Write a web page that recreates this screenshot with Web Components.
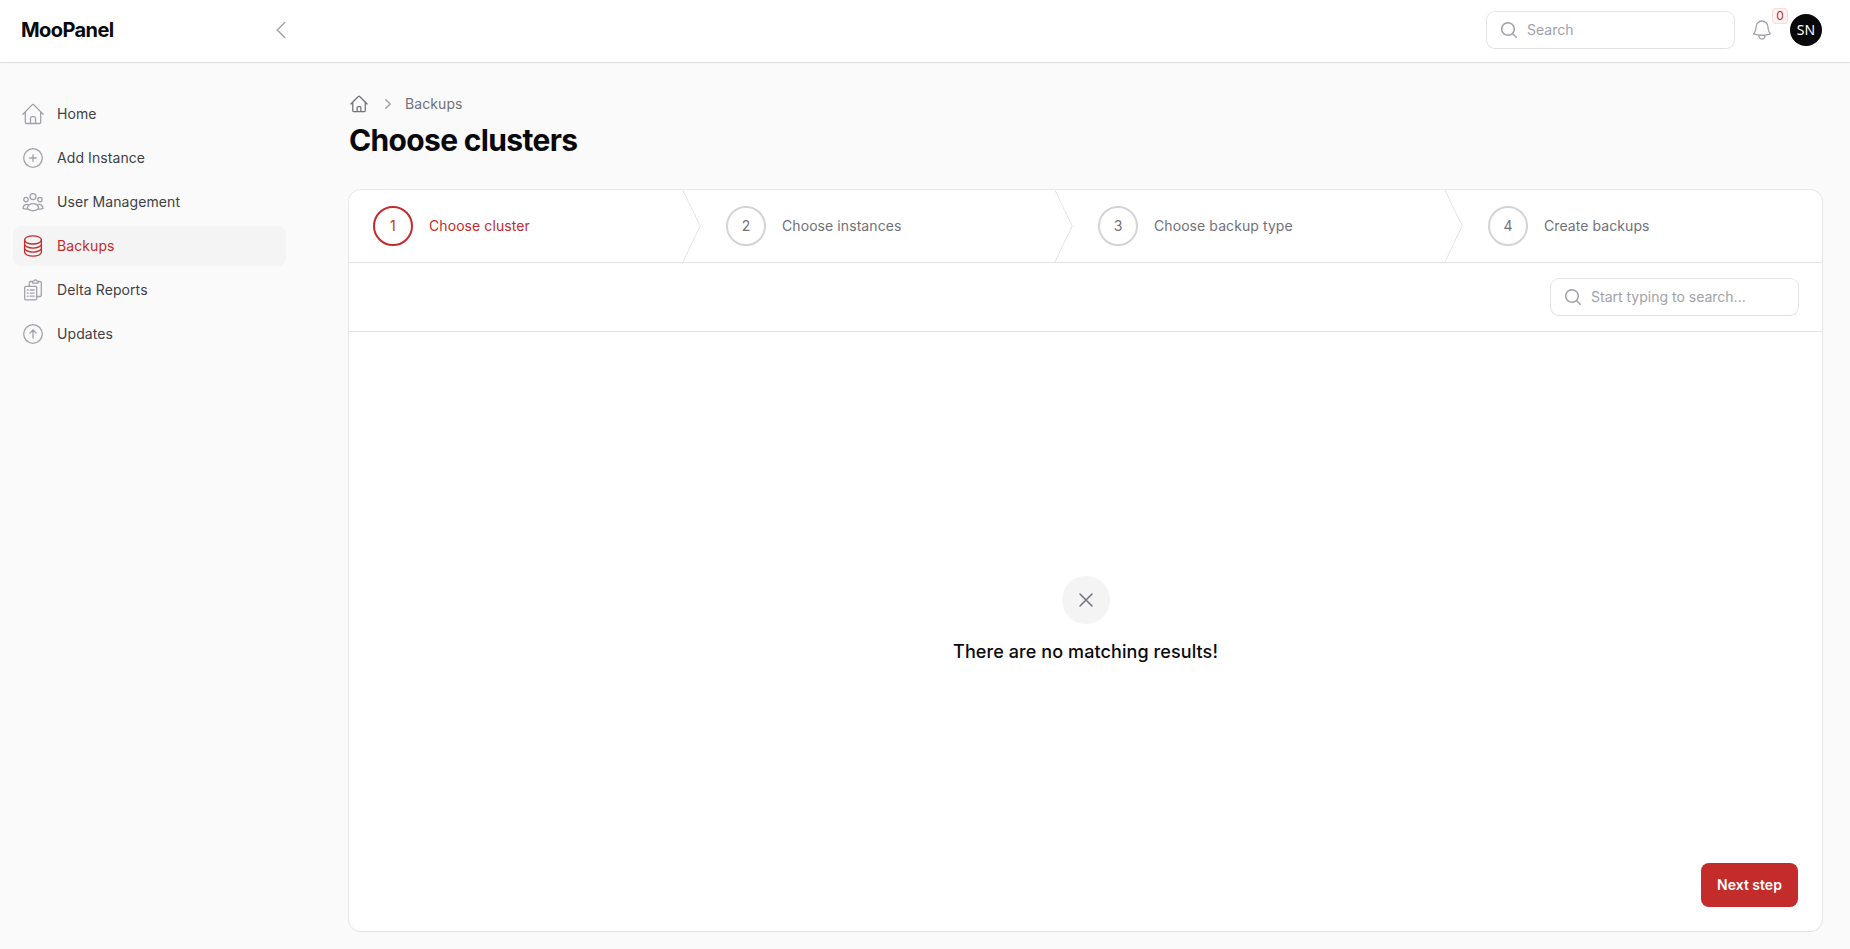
<!DOCTYPE html>
<html lang="en">
<head>
<meta charset="utf-8">
<title>Choose clusters - MooPanel</title>
<style>
html,body{margin:0;height:100%}
body{font-family:Inter,sans-serif;font-size:14px;line-height:20px;color:#09090b;background:#fafafa;overflow:hidden}
</style>
</head>
<body>
<moo-app></moo-app>
<script>
const define = (name, html, setup) => {
  const t = document.createElement('template');
  t.innerHTML = html;
  customElements.define(name, class extends HTMLElement {
    constructor() {
      super();
      this.attachShadow({ mode: 'open' }).append(t.content.cloneNode(true));
    }
    connectedCallback() { if (setup) setup(this, this.shadowRoot); }
  });
};

const ICONS = {
  home: '<path d="M1.9 12.2 11.1 2.9a1.25 1.25 0 0 1 1.8 0l9.2 9.3M4.3 10.1v10.3a1.1 1.1 0 0 0 1.1 1.1h13.2a1.1 1.1 0 0 0 1.1-1.1V10.1M9.5 21.3v-5a1.6 1.6 0 0 1 1.6-1.6h1.8a1.6 1.6 0 0 1 1.6 1.6v5"/>',
  homeOutline: '<path d="m2.25 12 8.954-8.955c.44-.439 1.152-.439 1.591 0L21.75 12M4.5 9.75v10.125c0 .621.504 1.125 1.125 1.125H9.75v-4.875c0-.621.504-1.125 1.125-1.125h2.25c.621 0 1.125.504 1.125 1.125V21h4.125c.621 0 1.125-.504 1.125-1.125V9.75M8.25 21h8.25"/>',
  plus: '<circle cx="12" cy="12" r="9.3"/><path d="M12 8.7v6.6M8.7 12h6.6"/>',
  up: '<circle cx="12" cy="12" r="9.3"/><path d="M12 16V8.2M8.9 11.1 12 8l3.1 3.1"/>',
  users: '<circle cx="12" cy="6.6" r="3"/><circle cx="5" cy="9.6" r="2.2"/><circle cx="19" cy="9.6" r="2.2"/><path d="M6.2 18.4a5.9 5.9 0 0 1 11.6 0A12.5 12.5 0 0 1 12 20.9a12.5 12.5 0 0 1-5.8-2.5ZM7.2 14.6A3.9 3.9 0 0 0 2 18.4c1.2.6 2.6.8 4.2.6M16.8 14.6a3.9 3.9 0 0 1 5.2 3.8c-1.2.6-2.6.8-4.2.6"/>',
  database: '<ellipse cx="12" cy="5.9" rx="8.4" ry="4.1"/><path d="M3.6 5.9v12.2c0 2.27 3.76 4.1 8.4 4.1s8.4-1.83 8.4-4.1V5.9M20.4 10c0 2.27-3.76 4.1-8.4 4.1S3.6 12.27 3.6 10M20.4 14.05c0 2.27-3.76 4.1-8.4 4.1s-8.4-1.83-8.4-4.1"/>',
  report: '<rect x="3.7" y="8.4" width="12" height="13.4" rx="1.2"/><path d="M8.4 8.2V4.7a1.2 1.2 0 0 1 1.2-1.2h2M17 3.5h2.1a1.2 1.2 0 0 1 1.2 1.2v12.6a1.2 1.2 0 0 1-1.2 1.2h-3.2M11.6 5.1h5.5V4a1.2 1.2 0 0 0-1.2-1.2h-.3a1.35 1.35 0 0 0-2.5 0h-.3A1.2 1.2 0 0 0 11.6 4ZM6.4 12h.8M6.4 15.1h.8M6.4 18.2h.8M9.2 12h4M9.2 15.1h4M9.2 18.2h4"/>',
  bell: '<path d="M14.857 17.082a23.848 23.848 0 0 0 5.454-1.31A8.967 8.967 0 0 1 18 9.75V9A6 6 0 0 0 6 9v.75a8.967 8.967 0 0 1-2.312 6.022c1.733.64 3.56 1.085 5.455 1.31m5.714 0a24.255 24.255 0 0 1-5.714 0m5.714 0a3 3 0 1 1-5.714 0"/>',
  left: '<path d="M15.75 19.5 8.25 12l7.5-7.5"/>',
  x: '<path d="M6 18 18 6M6 6l12 12"/>',
  search: '<path fill="currentColor" stroke="none" transform="scale(1.2)" fill-rule="evenodd" clip-rule="evenodd" d="M9 3.5a5.5 5.5 0 1 0 0 11 5.5 5.5 0 0 0 0-11ZM2 9a7 7 0 1 1 12.452 4.391l3.328 3.329a.75.75 0 1 1-1.06 1.06l-3.329-3.328A7 7 0 0 1 2 9Z"/>',
  right: '<path fill="currentColor" stroke="none" transform="scale(1.2)" fill-rule="evenodd" clip-rule="evenodd" d="M7.21 14.77a.75.75 0 0 1 .02-1.06L11.168 10 7.23 6.29a.75.75 0 1 1 1.04-1.08l4.5 4.25a.75.75 0 0 1 0 1.08l-4.5 4.25a.75.75 0 0 1-1.06-.02Z"/>'
};

define('moo-icon', `<style>
  :host{display:block;flex:none;width:var(--size,24px);height:var(--size,24px)}
  svg{display:block;width:100%;height:100%;fill:none;stroke:currentColor;stroke-linecap:round;stroke-linejoin:round}
</style><svg viewBox="0 0 24 24" aria-hidden="true"></svg>`, (el, root) => {
  const svg = root.querySelector('svg');
  svg.setAttribute('stroke-width', el.getAttribute('weight') || '1.5');
  svg.innerHTML = ICONS[el.getAttribute('name')];
});

define('moo-search', `<style>
  :host{display:flex;align-items:center;gap:8px;box-sizing:border-box;width:247px;height:36px;padding:0 12px;border-radius:8px;background:#fff;color:#a1a1aa;
    box-shadow:0 0 0 1px rgba(9,9,11,.1),0 1px 2px rgba(0,0,0,.03)}
  moo-icon{--size:20px}
</style><moo-icon name="search"></moo-icon><span><slot></slot></span>`);

define('moo-topbar', `<style>
  :host{display:flex;align-items:center;box-sizing:border-box;height:62px;padding:0 28px 2px 21px;background:#fff;box-shadow:0 0 0 1px rgba(9,9,11,.1),0 1px 2px rgba(0,0,0,.02);position:relative}
  .brand{font-size:20px;font-weight:700;letter-spacing:-.58px;width:248px}
  .toggle{color:#a1a1aa;flex:1}
  .bell{position:relative;margin:0 16px;color:#a1a1aa}
  .badge{position:absolute;left:22px;top:-10px;width:16px;height:16px;box-sizing:border-box;border-radius:4px;background:#fdf3f3;box-shadow:inset 0 0 0 1px #f9dcdc;color:#c42b2b;font-size:12px;line-height:16px;text-align:center}
  .avatar{width:32px;height:32px;border-radius:50%;background:#09090b;color:#fff;font:400 14px/32px "Noto Sans",sans-serif;text-align:center}
</style>
<div class="brand">MooPanel</div><div class="toggle"><moo-icon name="left"></moo-icon></div>
<moo-search>Search</moo-search>
<div class="bell"><moo-icon name="bell" weight="1.3"></moo-icon><span class="badge">0</span></div>
<div class="avatar">SN</div>`);

define('moo-nav-item', `<style>
  :host{display:flex;align-items:center;gap:12px;box-sizing:border-box;height:40px;padding:8px;border-radius:8px;color:#3f3f46;letter-spacing:.08px}
  moo-icon{color:#a1a1aa}
  :host([active]){background:#f4f4f5;color:#c42b2b}
  :host([active]) moo-icon{color:#c42b2b}
</style><span><slot></slot></span>`, (el, root) => {
  const icon = document.createElement('moo-icon');
  icon.setAttribute('name', el.getAttribute('icon'));
  icon.setAttribute('weight', '1.3');
  root.querySelector('span').before(icon);
});

define('moo-sidebar', `<style>
  :host{display:flex;flex-direction:column;gap:4px;box-sizing:border-box;width:286px;padding:32px 0 0 13px;flex:none}
</style>
<moo-nav-item icon="home">Home</moo-nav-item>
<moo-nav-item icon="plus">Add Instance</moo-nav-item>
<moo-nav-item icon="users">User Management</moo-nav-item>
<moo-nav-item icon="database" active>Backups</moo-nav-item>
<moo-nav-item icon="report">Delta Reports</moo-nav-item>
<moo-nav-item icon="up">Updates</moo-nav-item>`);

define('moo-step', `<style>
  :host{display:flex;align-items:center;gap:16px;height:72px;padding-left:24px;color:#71717a;letter-spacing:.08px}
  .num{box-sizing:border-box;width:40px;height:40px;border:2px solid #d4d4d8;border-radius:50%;line-height:36px;text-align:center}
  .label{flex:1}
  svg{display:block;width:20px;height:72px;color:#e4e4e7}
  :host([active]){color:#c42b2b}
  :host([active]) .num{border-color:#c42b2b}
  :host([last]) svg{display:none}
</style><div class="num"></div><span class="label"><slot></slot></span>
<svg fill="none" preserveAspectRatio="none" viewBox="0 0 22 80"><path d="M0 -2L20 40L0 82" stroke="currentColor" stroke-linejoin="round" vector-effect="non-scaling-stroke"/></svg>`,
(el, root) => { root.querySelector('.num').textContent = el.getAttribute('number'); });

define('moo-wizard', `<style>
  :host{display:flex;flex-direction:column;height:741px;border-radius:12px;background:#fff;box-shadow:0 0 0 1px rgba(9,9,11,.07),0 1px 2px rgba(0,0,0,.03)}
  .steps{display:grid;grid-template-columns:353px 372px 390px 1fr;border-bottom:1px solid #e4e4e7}
  .tools{display:flex;justify-content:flex-end;padding:16px 24px;border-bottom:1px solid #e4e4e7}
  .empty{flex:1;display:flex;flex-direction:column;align-items:center;gap:16px;padding-top:244px}
  .dot{display:grid;place-items:center;width:48px;height:48px;border-radius:50%;background:#f4f4f5;color:#71717a}
  .empty span{font-size:18px;font-weight:500;line-height:24px;letter-spacing:.09px}
  .foot{display:flex;justify-content:flex-end;padding:0 24px 24px}
  button{font:600 14px/20px Inter,sans-serif;color:#fff;background:#c42b2b;border:0;border-radius:8px;width:97px;height:44px;padding:0}
</style>
<div class="steps">
<moo-step number="1" active>Choose cluster</moo-step><moo-step number="2">Choose instances</moo-step><moo-step number="3">Choose backup type</moo-step><moo-step number="4" last>Create backups</moo-step>
</div>
<div class="tools"><moo-search>Start typing to search...</moo-search></div>
<div class="empty"><div class="dot"><moo-icon name="x"></moo-icon></div><span>There are no matching results!</span></div>
<div class="foot"><button type="button">Next step</button></div>`);

define('moo-page', `<style>
  :host{display:block;flex:1;padding:32px 28px 0 63px}
  nav{display:flex;align-items:center;gap:9px;color:#71717a;letter-spacing:.08px}
  nav moo-icon{--size:20px}
  .sep{color:#a1a1aa}
  nav span{margin-left:-2px}
  h1{margin:8px 0 32px;font-size:30px;line-height:36px;font-weight:700;letter-spacing:-.66px}
</style>
<nav><moo-icon name="homeOutline"></moo-icon><moo-icon class="sep" name="right"></moo-icon><span>Backups</span></nav>
<h1>Choose clusters</h1>
<moo-wizard></moo-wizard>`);

define('moo-app', `<style>
  :host{display:block}
  .row{display:flex}
</style><moo-topbar></moo-topbar><div class="row"><moo-sidebar></moo-sidebar><moo-page></moo-page></div>`);
</script>
</body>
</html>
